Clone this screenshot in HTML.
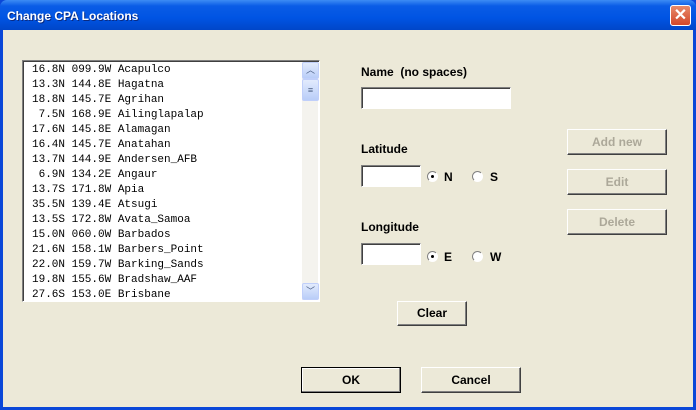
<!DOCTYPE html><html><head><style>
body{margin:0;width:696px;height:410px;overflow:hidden;font-family:"Liberation Sans",sans-serif;}
.win{position:absolute;left:0;top:0;width:696px;height:410px;background:#0a47d8;}
.title{position:absolute;left:0;top:0;width:696px;height:30px;background:linear-gradient(#3d8cf4,#0a5ce6 20%,#0054e3 60%,#0046c8);border-radius:7px 7px 0 0;}
.title span{position:absolute;left:7px;top:9px;color:#fff;font-weight:bold;font-size:12px;text-shadow:1px 1px #0a2a80;}
.close{position:absolute;left:670px;top:5px;width:19px;height:19px;border:1px solid #fff;border-radius:3px;background:linear-gradient(#e88a6a,#d2472a);color:#fff;font-size:16px;font-weight:bold;text-align:center;line-height:19px;}
.body{position:absolute;left:3px;top:30px;width:690px;height:377px;background:#ECE9D8;}
.a{position:absolute}
.list{left:22px;top:60px;width:296px;height:240px;background:#fff;border:1px solid;border-color:#7f7f7f #fff #fff #7f7f7f;box-shadow:inset 1px 1px #404040;}
.list pre{margin:0;position:absolute;left:9px;top:2px;font-family:"Liberation Mono",monospace;font-size:11px;line-height:15px;color:#000;}
.sb{left:302px;top:62px;width:16px;height:238px;background:#f4f3ee;}
.sbb{position:absolute;left:0;width:15px;height:15px;background:linear-gradient(#e2ebfd,#b9cdf8);border:1px solid #c0cffa;border-radius:2px;color:#4d6185;font-size:9px;text-align:center;line-height:15px;}
.lbl{font-weight:bold;font-size:12px;color:#000;}
.inp{background:#fff;border:1px solid;border-color:#7f7f7f #fff #fff #7f7f7f;box-shadow:inset 1px 1px #404040;}
.btn{background:#ECE9D8;border:1px solid;border-color:#fff #404040 #404040 #fff;box-shadow:inset -1px -1px #808080;font-weight:bold;font-size:12px;text-align:center;box-sizing:border-box;}
.dis{color:#aca899;}
.rad{width:11px;height:11px;border-radius:50%;background:#fff;border:1px solid;border-color:#808080 #fff #fff #808080;box-sizing:border-box;}
.dot{position:absolute;left:3px;top:3px;width:3px;height:3px;background:#000;border-radius:50%;}
</style></head><body><div class="win"><div class="title"><span>Change CPA Locations</span><div class="close">✕</div></div>
<div class="body" style="left:3px"></div>
<div class="a list"><pre>16.8N 099.9W Acapulco
13.3N 144.8E Hagatna
18.8N 145.7E Agrihan
 7.5N 168.9E Ailinglapalap
17.6N 145.8E Alamagan
16.4N 145.7E Anatahan
13.7N 144.9E Andersen_AFB
 6.9N 134.2E Angaur
13.7S 171.8W Apia
35.5N 139.4E Atsugi
13.5S 172.8W Avata_Samoa
15.0N 060.0W Barbados
21.6N 158.1W Barbers_Point
22.0N 159.7W Barking_Sands
19.8N 155.6W Bradshaw_AAF
27.6S 153.0E Brisbane</pre></div>
<div class="a sb"><div class="sbb" style="top:0">︿</div><div class="sbb" style="top:17px;height:20px;line-height:20px">≡</div><div class="sbb" style="top:221px">﹀</div></div>
<div class="a lbl" style="left:361px;top:65px">Name&nbsp; (no spaces)</div>
<div class="a inp" style="left:361px;top:87px;width:148px;height:20px"></div>
<div class="a lbl" style="left:361px;top:142px">Latitude</div>
<div class="a inp" style="left:361px;top:165px;width:58px;height:20px"></div>
<div class="a rad" style="left:427px;top:171px"><div class="dot"></div></div><div class="a lbl" style="left:444px;top:170px">N</div>
<div class="a rad" style="left:472px;top:171px"></div><div class="a lbl" style="left:490px;top:170px">S</div>
<div class="a lbl" style="left:361px;top:220px">Longitude</div>
<div class="a inp" style="left:361px;top:243px;width:58px;height:20px"></div>
<div class="a rad" style="left:427px;top:251px"><div class="dot"></div></div><div class="a lbl" style="left:444px;top:250px">E</div>
<div class="a rad" style="left:472px;top:251px"></div><div class="a lbl" style="left:490px;top:250px">W</div>
<div class="a btn dis" style="left:567px;top:129px;width:100px;height:26px;line-height:24px">Add new</div>
<div class="a btn dis" style="left:567px;top:169px;width:100px;height:26px;line-height:24px">Edit</div>
<div class="a btn dis" style="left:567px;top:209px;width:100px;height:26px;line-height:24px">Delete</div>
<div class="a btn" style="left:397px;top:301px;width:70px;height:25px;line-height:23px">Clear</div>
<div class="a btn" style="left:301px;top:367px;width:100px;height:26px;line-height:24px;border:1px solid #000;box-shadow:inset -1px -1px #808080,inset 1px 1px #fff">OK</div>
<div class="a btn" style="left:421px;top:367px;width:100px;height:26px;line-height:24px">Cancel</div>
</div></body></html>
